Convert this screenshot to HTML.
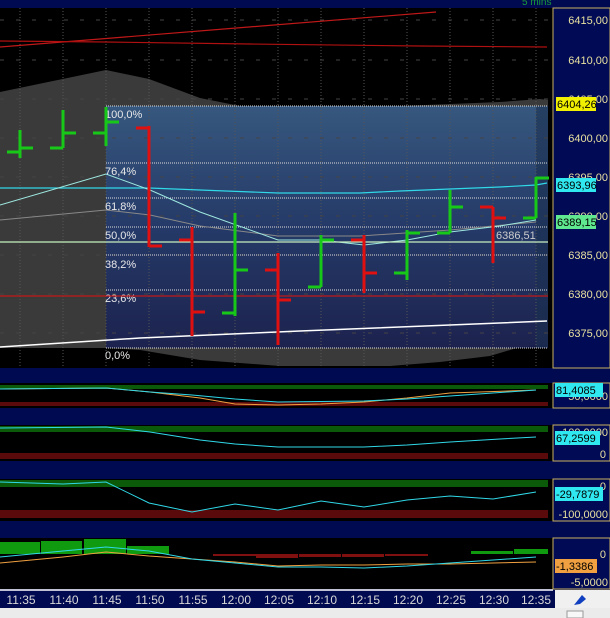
<!DOCTYPE html>
<html><head><meta charset="utf-8"><style>
html,body{margin:0;padding:0;background:#000a50;width:610px;height:618px;overflow:hidden}
svg{display:block}
text{font-family:"Liberation Sans",sans-serif}
</style></head><body>
<svg width="610" height="618" viewBox="0 0 610 618" xmlns="http://www.w3.org/2000/svg">
<defs>
<linearGradient id="fib" x1="0" y1="0" x2="0" y2="1">
<stop offset="0" stop-color="#365a84"/><stop offset="0.5" stop-color="#233a6c"/><stop offset="1" stop-color="#1a2050"/>
</linearGradient>
<pattern id="vg" width="43" height="10" patternUnits="userSpaceOnUse" x="20">
<line x1="0" y1="0" x2="0" y2="2" stroke="#777" stroke-width="1"/>
</pattern>
</defs>
<rect x="0" y="0" width="610" height="618" fill="#000a50"/>
<!-- main panel -->
<rect x="0" y="8" width="553" height="360" fill="#000"/>
<text x="522" y="5" font-size="10" fill="#1a9a3a">5 mins</text>
<!-- gray band -->
<polygon points="0,92 106,70 149,79 200,98 240,106 400,106 500,102 540,99 548,100 548,344 520,347 490,356 440,362 390,366 280,366 200,360 140,350 106,348 0,348" fill="#3a3a3a"/>
<!-- fib box -->
<rect x="106" y="106" width="442" height="242" fill="url(#fib)" opacity="0.92"/>
<rect x="536" y="106" width="12" height="242" fill="#1a3050" opacity="0.6"/>
<!-- grid -->
<g stroke="#555" stroke-width="1" stroke-dasharray="1,2">
<line x1="20" y1="8" x2="20" y2="368"/><line x1="63" y1="8" x2="63" y2="368"/><line x1="106" y1="8" x2="106" y2="368"/><line x1="149" y1="8" x2="149" y2="368"/><line x1="192" y1="8" x2="192" y2="368"/><line x1="235" y1="8" x2="235" y2="368"/><line x1="278" y1="8" x2="278" y2="368"/><line x1="321" y1="8" x2="321" y2="368"/><line x1="364" y1="8" x2="364" y2="368"/><line x1="407" y1="8" x2="407" y2="368"/><line x1="450" y1="8" x2="450" y2="368"/><line x1="493" y1="8" x2="493" y2="368"/><line x1="536" y1="8" x2="536" y2="368"/>
</g>
<g stroke="#444" stroke-width="1" stroke-dasharray="4,12">
<line x1="0" y1="20" x2="548" y2="20"/><line x1="0" y1="60" x2="548" y2="60"/><line x1="0" y1="99" x2="548" y2="99"/><line x1="0" y1="138" x2="548" y2="138"/><line x1="0" y1="177" x2="548" y2="177"/><line x1="0" y1="216" x2="548" y2="216"/><line x1="0" y1="255" x2="548" y2="255"/><line x1="0" y1="294" x2="548" y2="294"/><line x1="0" y1="333" x2="548" y2="333"/>
</g>
<!-- fib levels -->
<g stroke="#ddd" stroke-width="1" stroke-dasharray="1,1">
<line x1="106" y1="106" x2="548" y2="106"/><line x1="106" y1="163" x2="548" y2="163"/><line x1="106" y1="198" x2="548" y2="198"/><line x1="106" y1="227" x2="548" y2="227"/><line x1="106" y1="255" x2="548" y2="255"/><line x1="106" y1="290" x2="548" y2="290"/><line x1="106" y1="348" x2="548" y2="348"/>
</g>
<g font-size="11" fill="#e8e8e8">
<text x="105" y="118">100,0%</text><text x="105" y="175">76,4%</text><text x="105" y="210">61,8%</text><text x="105" y="239">50,0%</text><text x="105" y="268">38,2%</text><text x="105" y="302">23,6%</text><text x="105" y="359">0,0%</text>
<text x="496" y="239" fill="#ccc">6386,51</text>
</g>
<!-- red lines -->
<polyline points="0,47 436,12" fill="none" stroke="#c01818" stroke-width="1.2"/>
<polyline points="0,41 106,42 250,44 420,46 547,47" fill="none" stroke="#b01010" stroke-width="1.2"/>
<!-- indicator lines -->
<polyline points="0,188 149,188 200,190 278,193 360,193 400,191 450,189 500,187 536,185 547,183" fill="none" stroke="#30d8e8" stroke-width="1.2"/>
<polyline points="0,220 106,210 150,215 200,226 278,236 360,236 450,230 536,222" fill="none" stroke="#888" stroke-width="1"/>
<polyline points="0,205 106,174 150,190 200,212 278,240 320,240 364,245 407,240 450,232 500,226 536,220" fill="none" stroke="#9ee8e0" stroke-width="1"/>
<line x1="0" y1="242" x2="548" y2="242" stroke="#c8f0c0" stroke-width="1.2"/>
<line x1="0" y1="296" x2="548" y2="296" stroke="#c01818" stroke-width="1.2"/>
<polyline points="0,347 140,338 300,331 450,325 547,321" fill="none" stroke="#fff" stroke-width="1.5"/>
<!-- bars -->
<g stroke-width="3" fill="none">
<path d="M20 130V158M7 152H20M20 148H33" stroke="#18c818"/>
<path d="M63 110V148M50 148H63M63 133H76" stroke="#18c818"/>
<path d="M106 107V146M93 133H106M106 122H119" stroke="#18c818"/>
<path d="M149 126V247M136 128H149M149 246H162" stroke="#e01010"/>
<path d="M192 227V336M179 240H192M192 312H205" stroke="#e01010"/>
<path d="M235 213V316M222 313H235M235 270H248" stroke="#18c818"/>
<path d="M278 253V345M265 270H278M278 300H291" stroke="#e01010"/>
<path d="M321 235V287M308 287H321M321 240H334" stroke="#18c818"/>
<path d="M364 235V293M351 240H364M364 273H377" stroke="#e01010"/>
<path d="M407 230V280M394 273H407M407 233H420" stroke="#18c818"/>
<path d="M450 190V233M437 233H450M450 207H463" stroke="#18c818"/>
<path d="M493 207V263M480 207H493M493 218H506" stroke="#e01010"/>
<path d="M536 177V218M523 218H536M536 178H549" stroke="#18c818"/>
</g>
<!-- right axis -->
<rect x="553" y="8" width="57" height="360" fill="#000a55" stroke="#c8b060" stroke-width="1"/>
<g font-size="11" fill="#e8e0a0" text-anchor="end">
<text x="608" y="24">6415,00</text><text x="608" y="64">6410,00</text><text x="608" y="103">6405,00</text><text x="608" y="142">6400,00</text><text x="608" y="181">6395,00</text><text x="608" y="220">6390,00</text><text x="608" y="259">6385,00</text><text x="608" y="298">6380,00</text><text x="608" y="337">6375,00</text>
</g>
<rect x="556" y="97" width="40" height="14" fill="#f0f000"/><text x="557" y="108" font-size="11" fill="#000">6404,26</text>
<rect x="556" y="178" width="40" height="14" fill="#30e8f0"/><text x="557" y="189" font-size="11" fill="#000">6393,96</text>
<rect x="556" y="215" width="40" height="14" fill="#60e890"/><text x="557" y="226" font-size="11" fill="#000">6389,15</text>

<!-- panel 1 -->
<rect x="0" y="383" width="553" height="25" fill="#000"/>
<rect x="0" y="385" width="548" height="4" fill="#0a5a0a"/>
<rect x="0" y="402" width="548" height="4" fill="#5a0a0a"/>
<polyline points="0,389 106,388 150,392 200,398 235,404 278,405 321,404 364,402 407,398 450,393 536,390" fill="none" stroke="#f0a040" stroke-width="1"/>
<polyline points="0,389 106,388 150,392 192,395 235,399 278,402 364,401 407,399 450,396 536,390" fill="none" stroke="#30d8e8" stroke-width="1"/>
<rect x="553" y="383" width="57" height="25" fill="#000a55" stroke="#c8b060"/>
<text x="608" y="400" font-size="11" fill="#e8e0a0" text-anchor="end">50,0000</text>
<rect x="555" y="383" width="48" height="14" fill="#30e8f0"/><text x="556" y="394" font-size="11" fill="#000">81,4085</text>

<!-- panel 2 -->
<rect x="0" y="425" width="553" height="36" fill="#000"/>
<rect x="0" y="426" width="548" height="6" fill="#0a5a0a"/>
<rect x="0" y="453" width="548" height="6" fill="#5a0a0a"/>
<polyline points="0,428 106,427 150,432 200,440 235,444 278,447 364,447 407,445 450,442 500,439 536,437" fill="none" stroke="#30d8e8" stroke-width="1"/>
<rect x="553" y="425" width="57" height="36" fill="#000a55" stroke="#c8b060"/>
<text x="608" y="436" font-size="11" fill="#e8e0a0" text-anchor="end">100,0000</text>
<text x="606" y="458" font-size="11" fill="#e8e0a0" text-anchor="end">0</text>
<rect x="555" y="431" width="45" height="14" fill="#30e8f0"/><text x="556" y="442" font-size="11" fill="#000">67,2599</text>

<!-- panel 3 -->
<rect x="0" y="479" width="553" height="42" fill="#000"/>
<rect x="0" y="480" width="548" height="7" fill="#0a5a0a"/>
<rect x="0" y="510" width="548" height="8" fill="#5a0a0a"/>
<polyline points="0,482 63,484 106,482 149,503 192,512 235,504 278,510 321,501 364,507 407,500 450,496 493,499 536,492" fill="none" stroke="#30d8e8" stroke-width="1"/>
<rect x="553" y="479" width="57" height="42" fill="#000a55" stroke="#c8b060"/>
<text x="606" y="490" font-size="11" fill="#e8e0a0" text-anchor="end">0</text>
<text x="608" y="518" font-size="11" fill="#e8e0a0" text-anchor="end">-100,0000</text>
<rect x="555" y="487" width="48" height="14" fill="#30e8f0"/><text x="556" y="498" font-size="11" fill="#000">-29,7879</text>

<!-- panel 4 -->
<rect x="0" y="538" width="553" height="51" fill="#000"/>
<g fill="#109a10">
<rect x="0" y="542" width="40" height="12"/><rect x="41" y="541" width="41" height="13"/><rect x="84" y="539" width="42" height="15"/><rect x="127" y="546" width="42" height="8"/>
<rect x="471" y="551" width="42" height="3"/><rect x="514" y="549" width="34" height="5"/>
</g>
<g fill="#801010">
<rect x="213" y="554" width="43" height="2"/><rect x="256" y="554" width="42" height="4"/><rect x="299" y="554" width="42" height="3"/><rect x="342" y="554" width="42" height="3"/><rect x="385" y="554" width="43" height="2"/>
</g>
<polyline points="0,563 63,557 106,552 149,556 192,559 235,562 278,566 321,565 364,565 407,564 450,564 493,563 536,562" fill="none" stroke="#f0a040" stroke-width="1"/>
<polyline points="0,557 63,551 106,547 149,551 192,559 235,563 278,567 321,567 364,568 407,566 450,563 493,560 536,557" fill="none" stroke="#30d8e8" stroke-width="1"/>
<line x1="0" y1="590" x2="553" y2="590" stroke="#fff" stroke-width="1.5"/>
<rect x="553" y="538" width="57" height="51" fill="#000a55" stroke="#c8b060"/>
<text x="606" y="558" font-size="11" fill="#e8e0a0" text-anchor="end">0</text>
<text x="608" y="586" font-size="11" fill="#e8e0a0" text-anchor="end">-5,0000</text>
<rect x="555" y="559" width="42" height="14" fill="#f0a040"/><text x="556" y="570" font-size="11" fill="#000">-1,3386</text>

<!-- time axis -->
<g font-size="12" fill="#d8d8d8" text-anchor="middle">
<text x="21" y="604">11:35</text><text x="64" y="604">11:40</text><text x="107" y="604">11:45</text><text x="150" y="604">11:50</text><text x="193" y="604">11:55</text><text x="236" y="604">12:00</text><text x="279" y="604">12:05</text><text x="322" y="604">12:10</text><text x="365" y="604">12:15</text><text x="408" y="604">12:20</text><text x="451" y="604">12:25</text><text x="494" y="604">12:30</text><text x="536" y="604">12:35</text>
</g>
<rect x="555" y="590" width="55" height="20" fill="#f0f0f0"/>
<path d="M574 605 L582 595 L586 599 L580 604 Z" fill="#1040c0"/>
<rect x="0" y="608" width="610" height="10" fill="#ebebeb"/>
<rect x="567" y="611" width="16" height="7" fill="#f8f8f8" stroke="#999"/>
</svg>
</body></html>
